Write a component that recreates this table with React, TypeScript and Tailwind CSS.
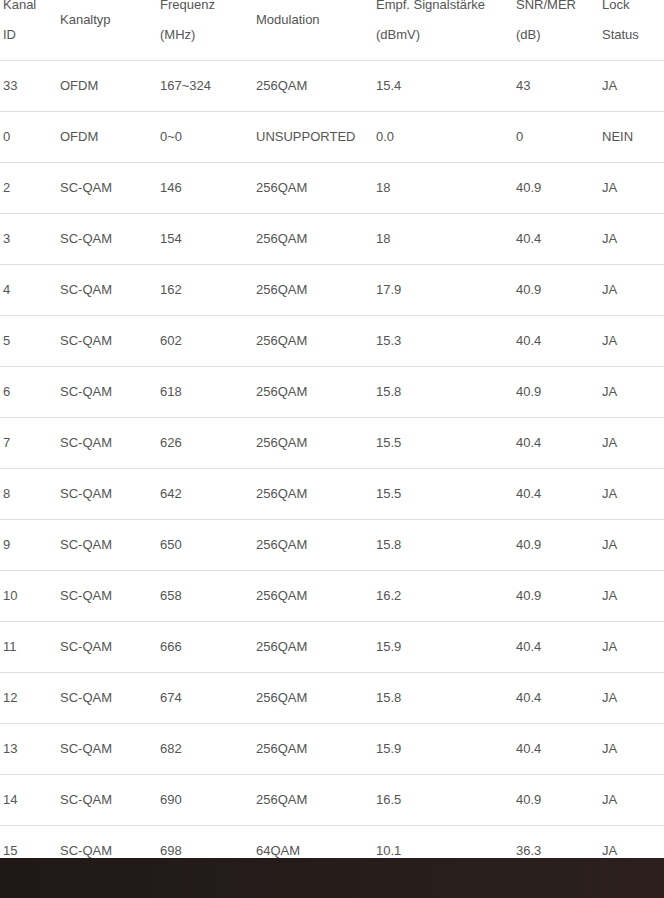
import React from 'react';

interface Channel {
  id: string;
  type: string;
  freq: string;
  mod: string;
  power: string;
  snr: string;
  lock: string;
}

const channels: Channel[] = [
  { id: '33', type: 'OFDM', freq: '167~324', mod: '256QAM', power: '15.4', snr: '43', lock: 'JA' },
  { id: '0', type: 'OFDM', freq: '0~0', mod: 'UNSUPPORTED', power: '0.0', snr: '0', lock: 'NEIN' },
  { id: '2', type: 'SC-QAM', freq: '146', mod: '256QAM', power: '18', snr: '40.9', lock: 'JA' },
  { id: '3', type: 'SC-QAM', freq: '154', mod: '256QAM', power: '18', snr: '40.4', lock: 'JA' },
  { id: '4', type: 'SC-QAM', freq: '162', mod: '256QAM', power: '17.9', snr: '40.9', lock: 'JA' },
  { id: '5', type: 'SC-QAM', freq: '602', mod: '256QAM', power: '15.3', snr: '40.4', lock: 'JA' },
  { id: '6', type: 'SC-QAM', freq: '618', mod: '256QAM', power: '15.8', snr: '40.9', lock: 'JA' },
  { id: '7', type: 'SC-QAM', freq: '626', mod: '256QAM', power: '15.5', snr: '40.4', lock: 'JA' },
  { id: '8', type: 'SC-QAM', freq: '642', mod: '256QAM', power: '15.5', snr: '40.4', lock: 'JA' },
  { id: '9', type: 'SC-QAM', freq: '650', mod: '256QAM', power: '15.8', snr: '40.9', lock: 'JA' },
  { id: '10', type: 'SC-QAM', freq: '658', mod: '256QAM', power: '16.2', snr: '40.9', lock: 'JA' },
  { id: '11', type: 'SC-QAM', freq: '666', mod: '256QAM', power: '15.9', snr: '40.4', lock: 'JA' },
  { id: '12', type: 'SC-QAM', freq: '674', mod: '256QAM', power: '15.8', snr: '40.4', lock: 'JA' },
  { id: '13', type: 'SC-QAM', freq: '682', mod: '256QAM', power: '15.9', snr: '40.4', lock: 'JA' },
  { id: '14', type: 'SC-QAM', freq: '690', mod: '256QAM', power: '16.5', snr: '40.9', lock: 'JA' },
  { id: '15', type: 'SC-QAM', freq: '698', mod: '64QAM', power: '10.1', snr: '36.3', lock: 'JA' },
  { id: '16', type: 'SC-QAM', freq: '706', mod: '256QAM', power: '15.2', snr: '40.4', lock: 'JA' },
];

const cols = 'grid grid-cols-[57px_100px_96px_120px_140px_86px_1fr] pl-[3px]';

export default function App() {
  return (
    <div
      className="h-[898px] flex flex-col bg-white text-[13px] text-[#555] overflow-hidden"
      style={{ fontFamily: '"Liberation Sans", Arial, sans-serif' }}
    >
      {/* Table (scrolled so the header is partly out of view) */}
      <div className="flex-1 overflow-hidden">
        <div className="-mt-[20px]">
          <div className={`${cols} border-b border-[#ddd] leading-[30px] py-[10px]`}>
            <div>Kanal<br />ID</div>
            <div className="self-center">Kanaltyp</div>
            <div>Frequenz<br />(MHz)</div>
            <div className="self-center">Modulation</div>
            <div>Empf. Signalstärke<br />(dBmV)</div>
            <div>SNR/MER<br />(dB)</div>
            <div>Lock<br />Status</div>
          </div>

          {channels.map((c, i) => (
            <div key={i} className={`${cols} border-b border-[#ddd] leading-[30px] py-[10px]`}>
              <div>{c.id}</div>
              <div>{c.type}</div>
              <div>{c.freq}</div>
              <div>{c.mod}</div>
              <div>{c.power}</div>
              <div>{c.snr}</div>
              <div>{c.lock}</div>
            </div>
          ))}
        </div>
      </div>

      {/* Footer bar */}
      <div className="h-[40px] shrink-0 bg-gradient-to-r from-[#1f1817] via-[#261d1b] to-[#2b201e]" />
    </div>
  );
}
